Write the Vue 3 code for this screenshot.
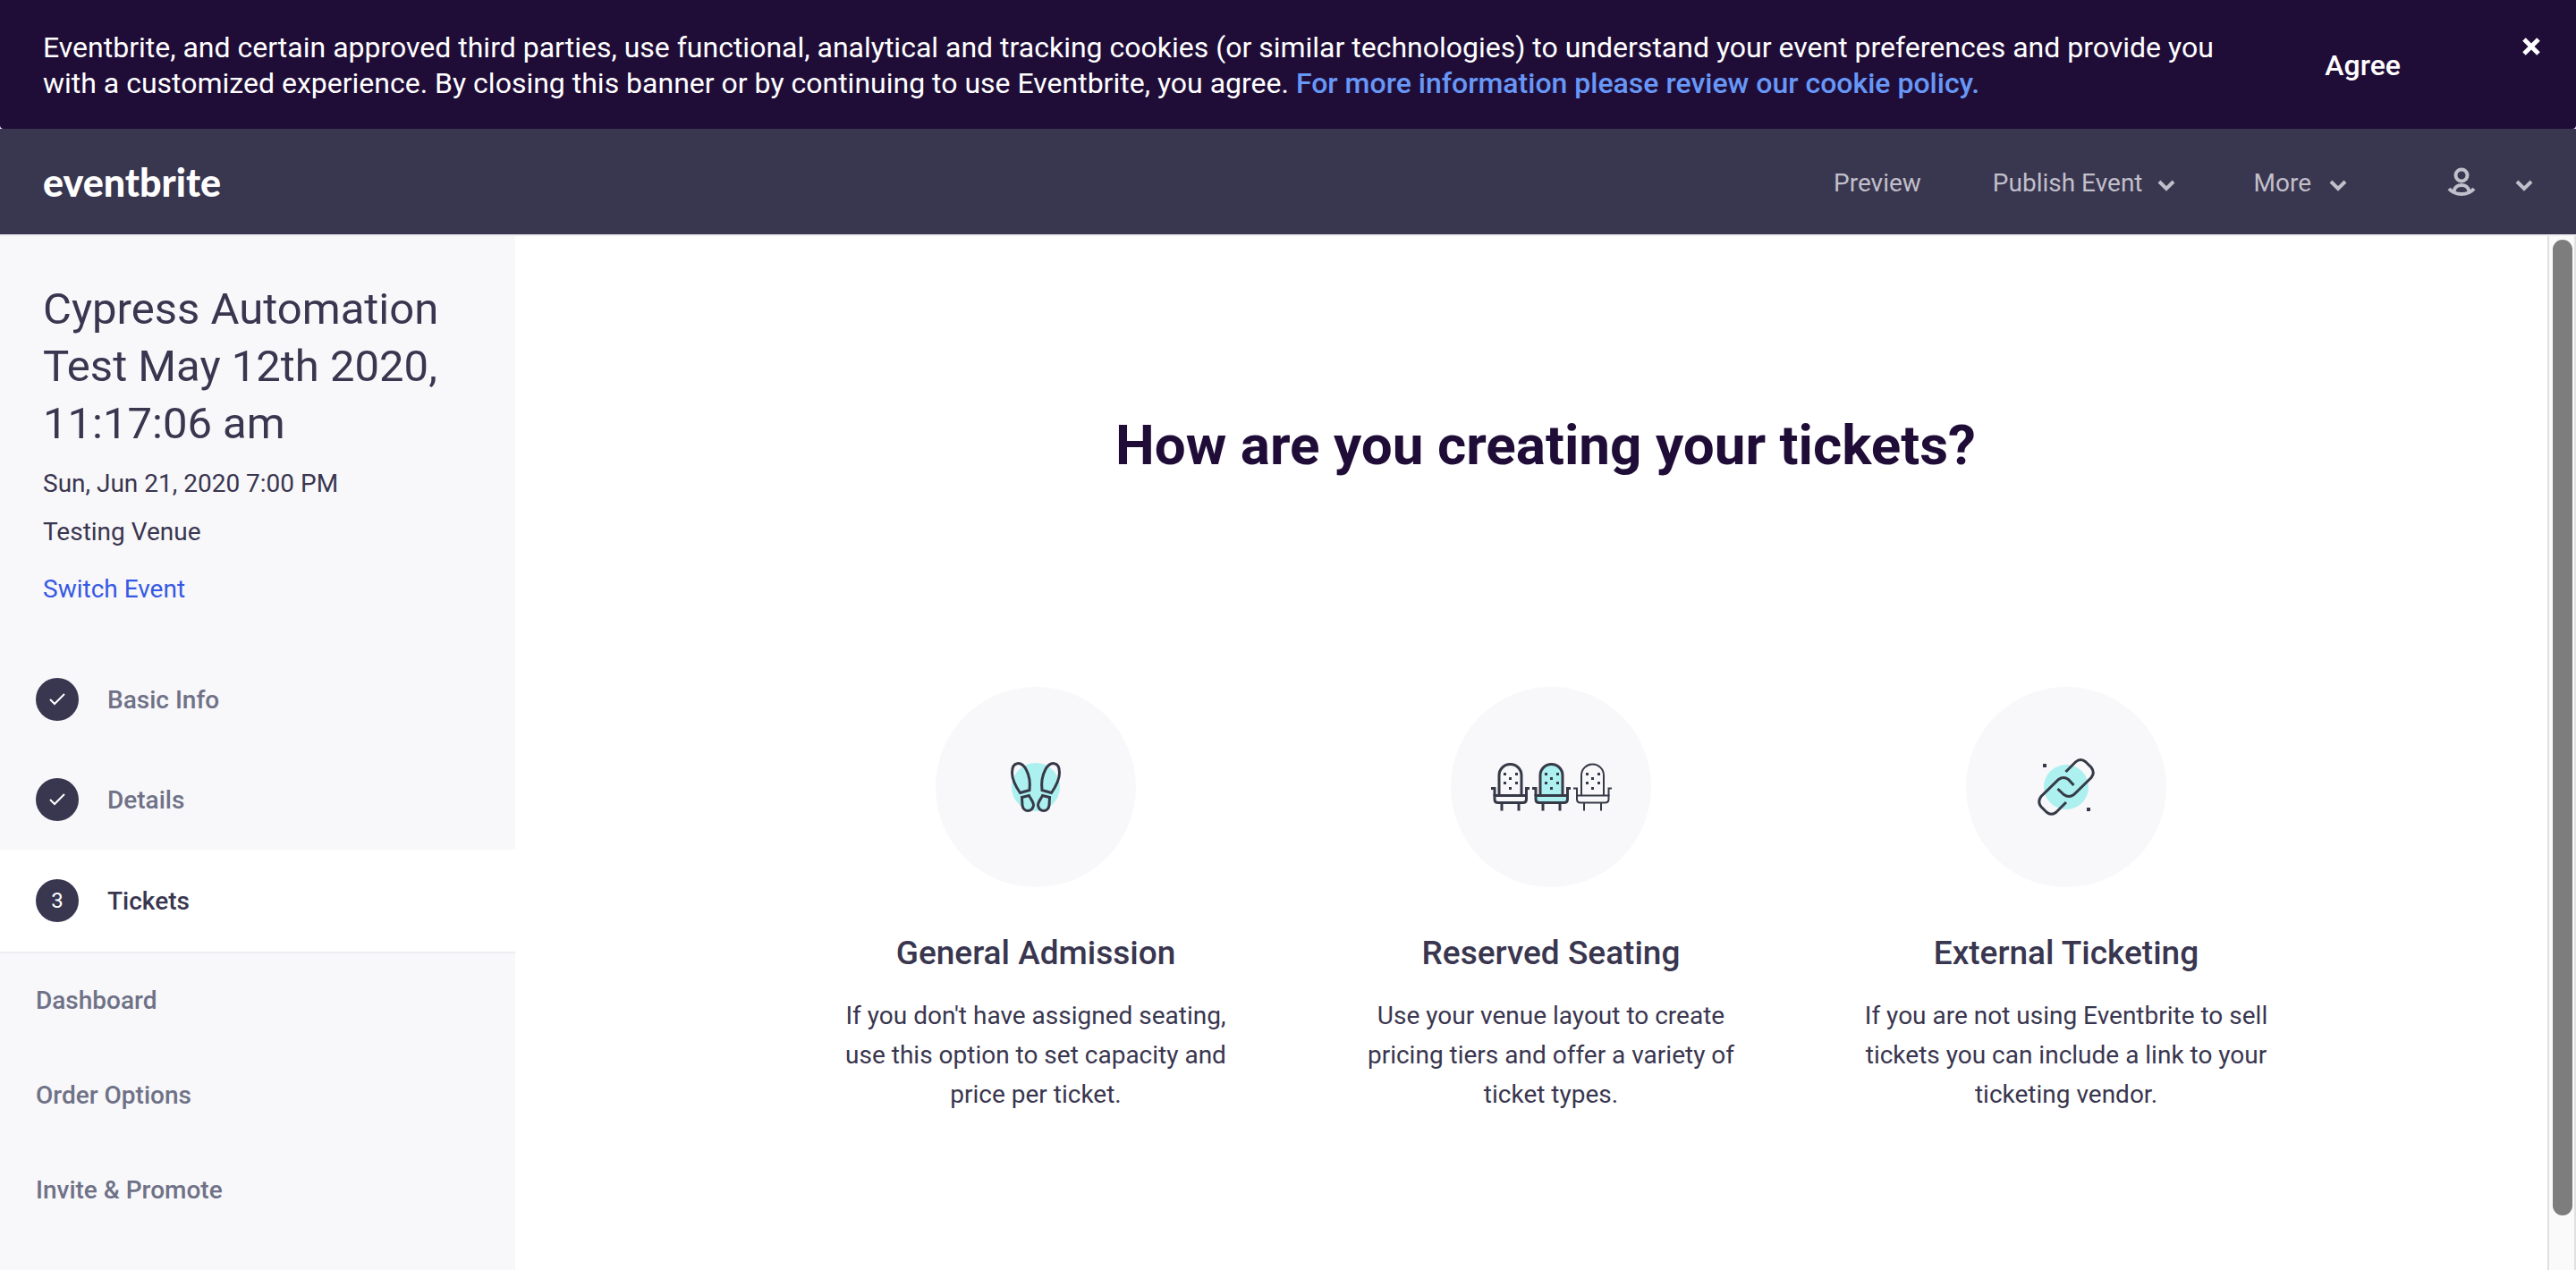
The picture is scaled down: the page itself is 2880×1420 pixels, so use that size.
<script setup>
const steps = [
  { label: 'Basic Info', done: true },
  { label: 'Details', done: true },
  { label: 'Tickets', done: false, active: true },
]
const links = ['Dashboard', 'Order Options', 'Invite & Promote']
const chairs = [0, 46, 92]
const studs = [[14, 12], [27, 12], [20, 17], [14, 22], [27, 22], [20, 28]]
</script>

<template>
  <div class="page">
    <section class="banner" aria-label="Cookie notice">
      <p class="banner-text">
        Eventbrite, and certain approved third parties, use functional, analytical and tracking cookies (or similar technologies) to understand your event preferences and provide you with a customized experience. By closing this banner or by continuing to use Eventbrite, you agree.
        <a href="#cookies">For more information please review our cookie policy.</a>
      </p>
      <button class="agree" type="button">Agree</button>
      <button class="close" type="button" aria-label="Close">
        <svg width="20" height="20" viewBox="0 0 20 20"><path d="M2 2 18 18M18 2 2 18" /></svg>
      </button>
    </section>

    <header class="nav">
      <a class="logo" href="#home">eventbrite</a>
      <nav class="menu">
        <a class="preview" href="#preview">Preview</a>
        <button class="publish" type="button">
          Publish Event
          <svg class="chevron" width="20" height="14" viewBox="0 0 20 14"><path d="M2 2 10 10 18 2" /></svg>
        </button>
        <button class="more" type="button">
          More
          <svg class="chevron" width="20" height="14" viewBox="0 0 20 14"><path d="M2 2 10 10 18 2" /></svg>
        </button>
        <button class="user" type="button" aria-label="Account">
          <svg width="32" height="34" viewBox="0 0 32 34">
            <circle cx="16" cy="9" r="6.500" />
            <path d="M2 24C9 32 23 32 30 24M7.500 27C9 17.500 23 17.500 24.500 27" />
          </svg>
          <svg class="chevron" width="20" height="14" viewBox="0 0 20 14"><path d="M2 2 10 10 18 2" /></svg>
        </button>
      </nav>
    </header>

    <div class="body">
      <aside class="sidebar">
        <div class="event">
          <h2>Cypress Automation Test May 12th 2020, 11:17:06 am</h2>
          <p class="date">Sun, Jun 21, 2020 7:00 PM</p>
          <p class="venue">Testing Venue</p>
          <a href="#switch">Switch Event</a>
        </div>
        <ol class="steps">
          <li v-for="(s, i) in steps" :key="s.label">
            <a href="#step" :class="['step', { active: s.active }]">
              <span class="badge">
                <svg v-if="s.done" width="20" height="16" viewBox="0 0 20 16"><path d="M2 8 7 13 18 2" /></svg>
                <template v-else>{{ i + 1 }}</template>
              </span>
              {{ s.label }}
            </a>
          </li>
        </ol>
        <ul class="links">
          <li v-for="l in links" :key="l"><a href="#section">{{ l }}</a></li>
        </ul>
      </aside>

      <main class="main">
        <h1>How are you creating your tickets?</h1>
        <div class="options">
          <a class="option" href="#general">
            <span class="disc">
              <svg width="56" height="56" viewBox="0 0 56 56">
                <circle class="tint" cx="28" cy="28" r="27" />
                <g>
                  <path class="sole" d="M10.500 34.500C4 25 1.500 18 1.500 12C1.500-1 12-1.500 17.500 9C21.500 16.500 22 23 21 31.500Z" />
                  <path class="heel" d="M12.500 39.500 20.500 37.500C22 41 25.500 44.500 25.500 48.500C24 56.500 14 56.500 13 48.500Z" />
                </g>
                <g transform="translate(56 0) scale(-1 1)">
                  <path class="sole" d="M10.500 34.500C4 25 1.500 18 1.500 12C1.500-1 12-1.500 17.500 9C21.500 16.500 22 23 21 31.500Z" />
                  <path class="heel" d="M12.500 39.500 20.500 37.500C22 41 25.500 44.500 25.500 48.500C24 56.500 14 56.500 13 48.500Z" />
                </g>
              </svg>
            </span>
            <h3>General Admission</h3>
            <p>If you don't have assigned seating, use this option to set capacity and price per ticket.</p>
          </a>
          <a class="option" href="#reserved">
            <span class="disc">
              <svg width="135" height="56" viewBox="0 0 135 56">
                <g v-for="(x, i) in chairs" :key="x" :transform="`translate(${x} 0)`" :class="['chair', 'chair-' + i]">
                  <path class="seat" d="M9 37V15A12.500 12.500 0 0 1 34 15V37" />
                  <path class="seat" d="M4 37.500H39.500V41.500Q39.500 45.500 35.500 45.500H8Q4 45.500 4 41.500Z" />
                  <path class="frame" d="M0 29.500H4V38M43 29.500H39.500V38M12 45.500V54.500M31 45.500V54.500" />
                  <rect v-for="([sx, sy], k) in studs" :key="k" class="stud" :x="sx" :y="sy" width="3" height="3" />
                </g>
              </svg>
            </span>
            <h3>Reserved Seating</h3>
            <p>Use your venue layout to create pricing tiers and offer a variety of ticket types.</p>
          </a>
          <a class="option" href="#external">
            <span class="disc">
              <svg width="64" height="64" viewBox="0 0 64 64">
                <circle class="tint" cx="32" cy="32" r="25" />
                <path class="link-line" d="M31.500 15 42.500 4Q48-1 54 4L60 10Q64.500 16 60 21.500L40.500 40.500Q35 44.500 29.500 40.500L22.500 34" />
                <path class="link-line" d="M32 49 21 60Q15.500 64.500 10 60L4 54Q-0.500 48.500 4 42.500L23.500 23.500Q29 19.500 34.500 23.500L40.500 30" />
                <rect class="stud" x="6" y="6" width="4" height="4" />
                <rect class="stud" x="55" y="55" width="4" height="4" />
              </svg>
            </span>
            <h3>External Ticketing</h3>
            <p>If you are not using Eventbrite to sell tickets you can include a link to your ticketing vendor.</p>
          </a>
        </div>
      </main>
      <div class="scrollbar" aria-hidden="true"><div class="thumb"></div></div>
    </div>
  </div>
</template>

<style>
body { background: #fff; }
</style>

<style scoped>
* { box-sizing: border-box; }
.page {
  display: flex;
  flex-direction: column;
  min-height: 100vh;
  overflow: hidden;
  font-family: Roboto, "Liberation Sans", sans-serif;
  font-size: 28px;
  color: #39364f;
}
h1, h2, h3, p, ul, ol { margin: 0; padding: 0; list-style: none; font-weight: 400; }
a { color: inherit; text-decoration: none; }
button { padding: 0; border: 0; background: none; font: inherit; color: inherit; cursor: pointer; }
svg { display: block; flex: none; overflow: visible; fill: none; stroke: currentColor; }

.banner {
  display: flex;
  align-items: center;
  height: 144px;
  padding: 2px 40px 0 48px;
  border-radius: 0 0 4px 4px;
  background: #1f0d38;
  color: #fff;
  font-size: 32px;
  line-height: 40px;
}
.banner-text { flex: 1; margin-right: 100px; }
.banner-text a { color: #6898f7; font-weight: 500; }
.agree { margin-right: 136px; font-weight: 500; }
.close { align-self: flex-start; margin-top: 40px; }
.close svg { stroke-width: 5; }

.nav {
  display: flex;
  align-items: center;
  justify-content: space-between;
  height: 120px;
  padding: 2px 48px 0;
  border-bottom: 2px solid #eeedf2;
  background: #39364f;
  color: #c1bfca;
}
.logo { color: #fff; font-family: Lato, sans-serif; font-size: 43px; font-weight: 900; line-height: 48px; }
.menu { display: flex; align-items: center; }
.menu button { display: flex; align-items: center; }
.chevron { margin-top: 8px; stroke-width: 4; }
.preview { margin-right: 80px; }
.publish { gap: 16px; margin-right: 88px; }
.more { gap: 20px; margin-right: 112px; }
.user { gap: 44px; }
.user svg { stroke-width: 4; }

.body { position: relative; display: flex; flex: 1; }
.sidebar { flex: none; width: 576px; background: #f8f7fa; }
.event { padding: 50px 48px 0; line-height: 54px; }
.event h2 { margin-bottom: 8px; font-size: 49px; line-height: 64px; }
.event .venue { margin-bottom: 10px; }
.event a { color: #3659e3; }
.steps { padding-top: 40px; }
.step {
  display: flex;
  align-items: center;
  gap: 32px;
  height: 112px;
  padding-left: 40px;
  font-weight: 500;
  color: #6f7287;
}
.step.active { height: 116px; border-bottom: 2px solid #eeedf2; background: #fff; color: #39364f; }
.badge {
  display: flex;
  align-items: center;
  justify-content: center;
  width: 48px;
  height: 48px;
  border-radius: 50%;
  background: #39364f;
  color: #fff;
  font-size: 24px;
  font-weight: 400;
}
.badge svg { stroke-width: 2; }
.links a { display: block; padding-left: 40px; font-weight: 500; line-height: 106px; color: #6f7287; }

.main { flex: 1; padding-top: 198px; text-align: center; }
h1 { font-size: 62px; font-weight: 700; line-height: 72px; color: #1f0d38; }
.options { display: flex; justify-content: center; padding: 234px 0 80px 12px; }
.option { flex: none; width: 576px; padding: 0 60px; }
.disc {
  display: flex;
  align-items: center;
  justify-content: center;
  width: 224px;
  height: 224px;
  margin: 0 auto 50px;
  border-radius: 50%;
  background: #f8f7fa;
}
.option h3 { margin-bottom: 24px; font-size: 37px; font-weight: 500; line-height: 48px; }
.option p { line-height: 44px; }
.tint { fill: #acf0f0; stroke: none; }
.sole, .heel, .frame, .seat, .link-line { stroke: #363a47; stroke-width: 3; }
.chair-1 .seat { fill: #acf0f0; }
.chair-2 path { stroke-width: 2; }
.stud { fill: #363a47; stroke: none; }

.scrollbar {
  position: absolute;
  inset: 0 0 0 auto;
  width: 32px;
  padding: 4px;
  border: solid #e0e0e0;
  border-width: 0 2px;
  background: #fafafa;
}
.thumb { width: 22px; height: 95%; border-radius: 11px; background: #7d7d7d; }
</style>
